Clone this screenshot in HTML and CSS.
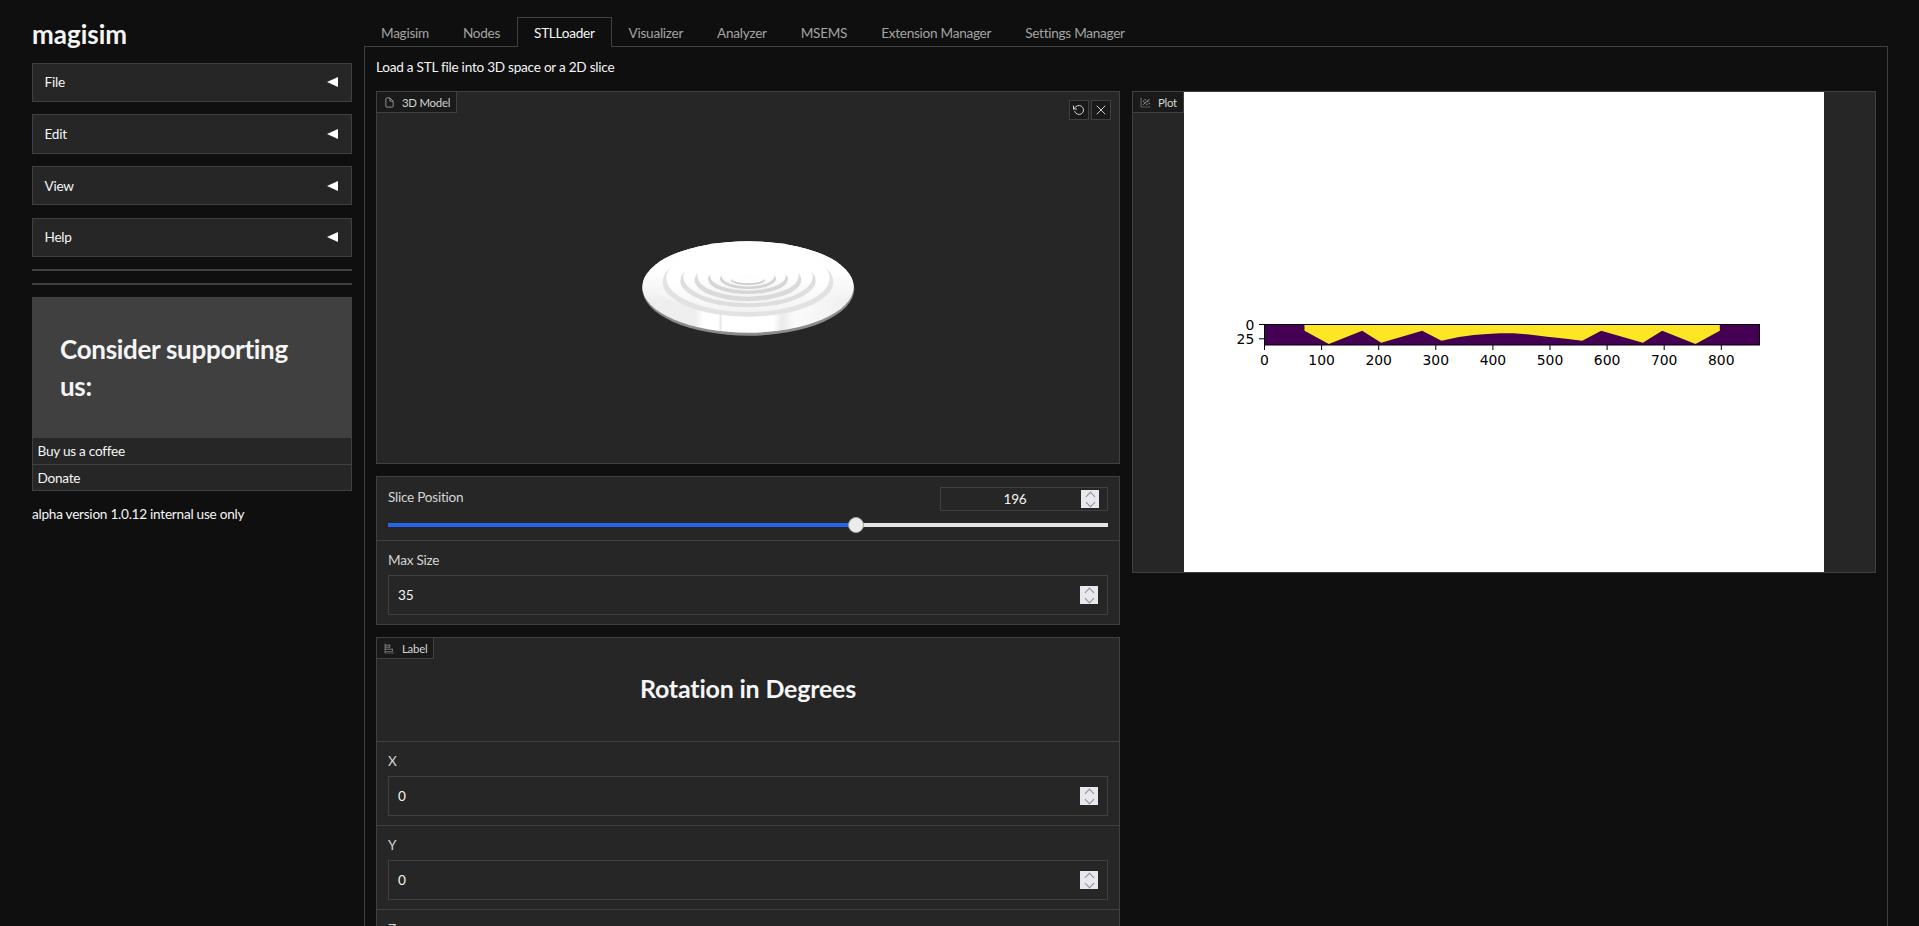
FILE: index.html
```html
<!DOCTYPE html>
<html lang="en">
<head>
    <meta charset="UTF-8">
    <meta name="viewport" content="width=device-width, initial-scale=1.0">
    <title>magisim</title>
    <link rel="stylesheet" href="styles.css">
</head>
<body>

    <div class="app">
        <aside class="sidebar">
            <h1 class="app-title">magisim</h1>
            <div class="menu">
                <div class="menu-item"><span>File</span><i class="arrow"></i></div>
                <div class="menu-item"><span>Edit</span><i class="arrow"></i></div>
                <div class="menu-item"><span>View</span><i class="arrow"></i></div>
                <div class="menu-item"><span>Help</span><i class="arrow"></i></div>
            </div>
            <hr class="rule">
            <hr class="rule">
            <div class="support">
                <h2>Consider supporting us:</h2>
            </div>
            <div class="support-links">
                <div class="support-link">Buy us a coffee</div>
                <div class="support-link">Donate</div>
            </div>
            <p class="version">alpha version 1.0.12 internal use only</p>
        </aside>

        <main class="content">
            <nav class="tabs">
                <button class="tab">Magisim</button>
                <button class="tab">Nodes</button>
                <button class="tab active">STLLoader</button>
                <button class="tab">Visualizer</button>
                <button class="tab">Analyzer</button>
                <button class="tab">MSEMS</button>
                <button class="tab">Extension Manager</button>
                <button class="tab">Settings Manager</button>
            </nav>

            <section class="panel">
                <p class="panel-desc">Load a STL file into 3D space or a 2D slice</p>
                <div class="columns">
                    <div class="col">
                        <div class="block model-block">
                            <div class="tag">
                                <svg class="tag-icon" viewBox="0 0 24 24" fill="none" stroke="currentColor" stroke-width="2"><path d="M13 2H6a2 2 0 0 0-2 2v16a2 2 0 0 0 2 2h12a2 2 0 0 0 2-2V9z"/><polyline points="13 2 13 9 20 9"/></svg>
                                <span>3D Model</span>
                            </div>
                            <div class="tools">
                                <button class="tool-btn"><svg viewBox="0 0 24 24" fill="none" stroke="currentColor" stroke-width="2" stroke-linecap="round" stroke-linejoin="round"><polyline points="1 4 1 10 7 10"/><path d="M3.51 15a9 9 0 1 0 2.13-9.36L1 10"/></svg></button>
                                <button class="tool-btn"><svg viewBox="0 0 24 24" fill="none" stroke="currentColor" stroke-width="2" stroke-linecap="round"><line x1="4" y1="4" x2="20" y2="20"/><line x1="20" y1="4" x2="4" y2="20"/></svg></button>
                            </div>
                            <svg class="model-view" viewBox="0 0 742 371">
                                <defs>
                                    <linearGradient id="top-shade" x1="0" y1="0" x2="0" y2="1">
                                        <stop offset="0" stop-color="#ffffff"/>
                                        <stop offset="0.55" stop-color="#ffffff"/>
                                        <stop offset="1" stop-color="#f3f3f3"/>
                                    </linearGradient>
                                    <linearGradient id="rim" x1="0" y1="0" x2="1" y2="0">
                                        <stop offset="0" stop-color="#eeeeee"/>
                                        <stop offset="0.25" stop-color="#efefef"/>
                                        <stop offset="0.29" stop-color="#ffffff"/>
                                        <stop offset="0.36" stop-color="#ffffff"/>
                                        <stop offset="0.37" stop-color="#e8e8e8"/>
                                        <stop offset="0.38" stop-color="#ffffff"/>
                                        <stop offset="0.62" stop-color="#ffffff"/>
                                        <stop offset="0.66" stop-color="#ebebeb"/>
                                        <stop offset="0.72" stop-color="#fbfbfb"/>
                                        <stop offset="1" stop-color="#eeeeee"/>
                                    </linearGradient>
                                    <linearGradient id="top-fade" x1="0" y1="0" x2="0" y2="1">
                                        <stop offset="0" stop-color="#ffffff"/>
                                        <stop offset="0.4" stop-color="#ffffff" stop-opacity="0.9"/>
                                        <stop offset="0.65" stop-color="#ffffff" stop-opacity="0"/>
                                    </linearGradient>
                                </defs>
                                <g transform="translate(243 128) scale(.3333)">
                                    <ellipse cx="385" cy="206" rx="318" ry="141" fill="#8c8c8c"/>
                                    <ellipse cx="384" cy="201" rx="317" ry="137" fill="url(#rim)"/>
                                    <ellipse cx="384" cy="201" rx="317" ry="137" fill="url(#top-fade)"/>
                                    <ellipse cx="384" cy="178" rx="300" ry="96" fill="#f6f6f6"/>
                                    <ellipse cx="384" cy="176" rx="300" ry="110" fill="url(#top-fade)"/>
                                    <ellipse cx="384" cy="186" rx="256" ry="104" fill="#e2e2e2"/>
                                    <ellipse cx="384" cy="174" rx="245" ry="102" fill="url(#top-shade)"/>
                                    <ellipse cx="384" cy="182" rx="203" ry="80" fill="#dedede"/>
                                    <ellipse cx="384" cy="170" rx="194" ry="80" fill="url(#top-shade)"/>
                                    <ellipse cx="384" cy="180" rx="160" ry="63" fill="#dadada"/>
                                    <ellipse cx="384" cy="168" rx="152" ry="62" fill="url(#top-shade)"/>
                                    <ellipse cx="384" cy="178" rx="120" ry="44" fill="#d6d6d6"/>
                                    <ellipse cx="384" cy="168" rx="114" ry="44" fill="url(#top-shade)"/>
                                    <ellipse cx="384" cy="176" rx="84" ry="31" fill="#d2d2d2"/>
                                    <ellipse cx="384" cy="168" rx="80" ry="32" fill="url(#top-shade)"/>
                                    <ellipse cx="384" cy="180" rx="51" ry="15" fill="#cacaca"/>
                                    <ellipse cx="384" cy="176" rx="50" ry="14" fill="#fdfdfd"/>
                                </g>
                            </svg>
                        </div>

                        <div class="block form-block">
                            <div class="field slider-field">
                                <div class="slider-head">
                                    <label>Slice Position</label>
                                    <div class="num-wrap small"><input class="num" type="number" value="196"><span class="spin"></span></div>
                                </div>
                                <input class="range" type="range" min="0" max="300" value="196">
                            </div>
                            <div class="field">
                                <label>Max Size</label>
                                <div class="num-wrap"><input class="num" type="number" value="35"><span class="spin"></span></div>
                            </div>
                        </div>

                        <div class="block form-block label-block">
                            <div class="tag">
                                <svg class="tag-icon" viewBox="0 0 32 32" fill="currentColor"><path d="M4 2H2v26a2 2 0 0 0 2 2h26v-2H4v-3h22v-8H4v-4h14V5H4Zm20 17v4H4v-4ZM16 7v4H4V7Z"/></svg>
                                <span>Label</span>
                            </div>
                            <h2 class="label-heading">Rotation in Degrees</h2>
                            <div class="field">
                                <label>X</label>
                                <div class="num-wrap"><input class="num" type="number" value="0"><span class="spin"></span></div>
                            </div>
                            <div class="field">
                                <label>Y</label>
                                <div class="num-wrap"><input class="num" type="number" value="0"><span class="spin"></span></div>
                            </div>
                            <div class="field">
                                <label>Z</label>
                                <div class="num-wrap"><input class="num" type="number" value="0"><span class="spin"></span></div>
                            </div>
                        </div>
                    </div>

                    <div class="col">
                        <div class="block plot-block">
                            <div class="tag">
                                <svg class="tag-icon" viewBox="0 0 32 32" fill="currentColor"><path d="M4 2H2v26a2 2 0 0 0 2 2h26v-2H4Z"/><path d="M8 22 27 5l1.400 1.500L9.400 23.500Z"/><circle cx="10" cy="12" r="2"/><circle cx="15" cy="8" r="2"/><circle cx="14" cy="17" r="2"/><circle cx="23" cy="13" r="2"/><circle cx="20" cy="21" r="2"/><circle cx="27" cy="19" r="2"/></svg>
                                <span>Plot</span>
                            </div>
                            <svg class="plot-image" viewBox="0 0 640 480">
                                <rect width="640" height="480" fill="#fff"/>
                                <rect x="80" y="232" width="496" height="21" fill="#440154"/>
                                <polygon fill="#fde725" points="120.500,232 120.500,238.700 144.800,252 178.200,238.700 197.200,250.700 238.200,238.700 257.500,248.700 275,245 289.800,243 303,242 316.500,241.300 329.800,241.300 345,242.500 363.200,244.700 380,246.500 398.200,248.700 417.200,238.700 458.800,250.700 478.200,238.700 511.500,252 535.800,238.700 535.800,232"/>
                                <rect x="80.500" y="232.500" width="495" height="20.500" fill="none" stroke="#000" stroke-width="1"/>
                                <g stroke="#000" stroke-width="1">
                                    <path d="M80.500 253v5M137.600 253v5M194.700 253v5M251.800 253v5M308.900 253v5M366 253v5M423.100 253v5M480.200 253v5M537.300 253v5"/>
                                    <path d="M75 232.500h5M75 246.800h5"/>
                                </g>
                                <g class="plot-ticks" text-anchor="middle">
                                    <text x="80.500" y="273">0</text>
                                    <text x="137.600" y="273">100</text>
                                    <text x="194.700" y="273">200</text>
                                    <text x="251.800" y="273">300</text>
                                    <text x="308.900" y="273">400</text>
                                    <text x="366" y="273">500</text>
                                    <text x="423.100" y="273">600</text>
                                    <text x="480.200" y="273">700</text>
                                    <text x="537.300" y="273">800</text>
                                </g>
                                <g class="plot-ticks" text-anchor="end">
                                    <text x="70.300" y="238">0</text>
                                    <text x="70.300" y="252">25</text>
                                </g>
                            </svg>
                        </div>
                    </div>
                </div>
            </section>
        </main>
    </div>

</body>
</html>
```

FILE: styles.css
```css
:root {
    --bg-color: #0f0f0f;
    --block-color: #262626;
    --border-color: #404040;
    --tag-color: #1a1a1a;
    --text-color: #f5f5f5;
    --muted-color: #a3a3a3;
    --label-color: #d4d4d4;
}

* { margin: 0; padding: 0; box-sizing: border-box; }

html, body { height: 926px; overflow: hidden; }

body {
    background-color: var(--bg-color);
    color: var(--text-color);
    font-family: 'Lato', 'Liberation Sans', sans-serif;
    font-size: 13.6px;
    letter-spacing: -0.25px;
}

.app { display: flex; }

/* sidebar */
.sidebar {
    width: 320px;
    margin-left: 32px;
    flex-shrink: 0;
}
.app-title {
    font-size: 26px;
    font-weight: 700;
    line-height: 32px;
    padding-top: 18px;
    margin-bottom: 12.7px;
    letter-spacing: 0;
}
.menu { display: flex; flex-direction: column; gap: 12.4px; }
.menu-item {
    height: 39.3px;
    display: flex;
    align-items: center;
    justify-content: space-between;
    padding: 0 13px 0 11.5px;
    background-color: var(--block-color);
    border: 1px solid var(--border-color);
}
.arrow {
    width: 0;
    height: 0;
    border-top: 5.5px solid transparent;
    border-bottom: 5.5px solid transparent;
    border-right: 11px solid #fff;
}
.rule { border: none; height: 2px; background-color: var(--border-color); margin-top: 12px; }
.support {
    margin-top: 12px;
    height: 141px;
    padding: 34px 28px 0;
    background-color: var(--border-color);
}
.support h2 { font-size: 26px; font-weight: 700; line-height: 37px; letter-spacing: -0.3px; }
.support-links { border: 1px solid var(--border-color); border-top: none; }
.support-link {
    height: 26px;
    line-height: 26px;
    padding-left: 4.5px;
    background-color: var(--block-color);
}
.support-link + .support-link { border-top: 1px solid var(--border-color); }
.version { margin-top: 13px; line-height: 20px; }

/* tabs and the main panel */
.content { margin-left: 12px; width: 1524px; flex-shrink: 0; }
.tabs { display: flex; height: 47px; padding-top: 17px; }
.tab {
    background: none;
    border: 1px solid transparent;
    border-bottom: none;
    color: var(--muted-color);
    font: inherit;
    letter-spacing: -0.28px;
    padding: 0 16px;
    height: 30px;
}
.tab.active {
    color: var(--text-color);
    background-color: var(--bg-color);
    border-color: var(--border-color);
    position: relative;
    z-index: 1;
}
.panel {
    border: 1px solid var(--border-color);
    margin-top: -1px;
    padding: 10px 11px 0;
}
.panel-desc { line-height: 20px; margin-bottom: 14px; }
.columns { display: grid; grid-template-columns: 744px 744px; gap: 12px; align-items: start; }
.col { display: flex; flex-direction: column; gap: 12px; }

/* blocks */
.block {
    position: relative;
    background-color: var(--block-color);
    border: 1px solid var(--border-color);
}
.tag {
    position: absolute;
    top: 0;
    left: 0;
    height: 21px;
    display: flex;
    align-items: center;
    gap: 7px;
    padding: 0 6px 0 7px;
    font-size: 11.4px;
    color: var(--label-color);
    background-color: var(--tag-color);
    border-right: 1px solid var(--border-color);
    border-bottom: 1px solid var(--border-color);
    z-index: 1;
}
.tag-icon { width: 11px; height: 11px; color: #999; flex-shrink: 0; }

.model-block { height: 373px; }
.model-view { display: block; width: 100%; height: 100%; }
.tools { position: absolute; top: 8px; right: 8px; display: flex; gap: 2px; }
.tool-btn {
    width: 20px;
    height: 20px;
    display: flex;
    align-items: center;
    justify-content: center;
    background-color: var(--tag-color);
    border: 1px solid var(--border-color);
    color: #d0d0d0;
}
.tool-btn svg { width: 12px; height: 12px; }

/* form rows */
.field { padding: 9px 11px 8px; height: 84px; border-top: 1px solid var(--border-color); }
.form-block > .field:first-child { border-top: none; height: 63px; padding-top: 10px; }
.field label { display: block; line-height: 20px; margin-bottom: 5px; color: var(--label-color); }

.num-wrap { position: relative; height: 40px; }
.num-wrap.small { width: 168px; height: 24px; }
.num {
    display: block;
    width: 100%;
    height: 100%;
    padding: 0 30px 0 9px;
    color: var(--text-color);
    background-color: var(--block-color);
    border: 1px solid var(--border-color);
    font: inherit;
    letter-spacing: inherit;
    outline: none;
    appearance: textfield;
}
.num::-webkit-inner-spin-button { display: none; }
.small .num { text-align: center; padding: 0 26px 1px 8px; }
.spin {
    position: absolute;
    top: 50%;
    right: 10px;
    width: 18px;
    height: 18px;
    margin-top: -9px;
    background-color: #e8e8ee;
}
.small .spin { right: 9px; }
/* the two chevrons of the stepper */
.spin::before, .spin::after {
    content: '';
    position: absolute;
    left: 6px;
    width: 6px;
    height: 6px;
    border-left: 1px solid #8f8f9c;
    border-top: 1px solid #8f8f9c;
}
.spin::before { top: 3px; transform: rotate(45deg); }
.spin::after { top: 9px; transform: rotate(225deg); }

.slider-head { display: flex; justify-content: space-between; align-items: flex-start; }
.range {
    display: block;
    width: 100%;
    height: 16px;
    margin-top: 5px;
    -webkit-appearance: none;
    appearance: none;
    background: linear-gradient(to right, #2563eb 65%, #e5e5e5 65%) center / 100% 4px no-repeat;
}
.range::-webkit-slider-thumb {
    -webkit-appearance: none;
    width: 16px;
    height: 16px;
    border-radius: 50%;
    border: 1px solid #a3a3a3;
    background-color: #ececec;
}

.label-heading {
    height: 103px;
    padding-top: 25px;
    text-align: center;
    font-size: 25px;
    font-weight: 700;
    line-height: 50px;
    letter-spacing: -0.2px;
}

/* plot */
.plot-block { height: 482px; display: flex; justify-content: center; }
.plot-image { width: 640px; height: 480px; flex-shrink: 0; }
.plot-ticks { font-family: 'DejaVu Sans', sans-serif; font-size: 13.9px; letter-spacing: 0; fill: #000; }
```
